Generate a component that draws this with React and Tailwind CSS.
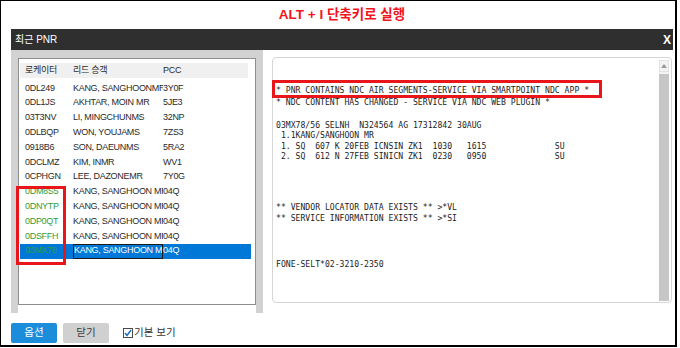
import React from 'react';

const rows = [
  { loc: '0DL249', name: 'KANG, SANGHOONMR', pcc: '3Y0F' },
  { loc: '0DL1JS', name: 'AKHTAR, MOIN MR', pcc: '5JE3' },
  { loc: '03T3NV', name: 'LI, MINGCHUNMS', pcc: '32NP' },
  { loc: '0DLBQP', name: 'WON, YOUJAMS', pcc: '7ZS3' },
  { loc: '0918B6', name: 'SON, DAEUNMS', pcc: '5RA2' },
  { loc: '0DCLMZ', name: 'KIM, INMR', pcc: 'WV1' },
  { loc: '0CPHGN', name: 'LEE, DAZONEMR', pcc: '7Y0G' },
  { loc: '0DM8S5', name: 'KANG, SANGHOON MR', pcc: '04Q', ndc: true },
  { loc: '0DNYTP', name: 'KANG, SANGHOON MR', pcc: '04Q', ndc: true },
  { loc: '0DP0QT', name: 'KANG, SANGHOON MR', pcc: '04Q', ndc: true },
  { loc: '0DSFFH', name: 'KANG, SANGHOON MR', pcc: '04Q', ndc: true },
  { loc: '03MX78', name: 'KANG, SANGHOON MR', pcc: '04Q', ndc: true, selected: true },
];

const Line = ({ children, className = '' }) => (
  <div className={`h-[10.4px] leading-[10.4px] whitespace-pre ${className}`}>{children}</div>
);

const PnrList = () => (
  <div className="w-[252px] h-[263px] border-x-[7px] border-t-[8px] border-[#d2d2d2] bg-white">
    <div className="h-[247px] border border-[#8e8e8e] bg-white pt-[4px] text-[9px] tracking-[-0.3px] text-[#2a2a2a]">
      <div className="ml-[1px] mr-[7px] h-[15px] bg-[#f0f0f0] flex items-center">
        <span className="pl-[5px] w-[53px]">로케이터</span>
        <span className="w-[90px]">리드 승객</span>
        <span>PCC</span>
      </div>
      <div className="mt-[3px] ml-[1px] mr-[4px]">
        {rows.map((r) => (
          <div
            key={r.loc}
            className={`h-[14.8px] flex items-center ${r.selected ? 'bg-[#0078d7] text-white' : ''}`}
          >
            <span className={`pl-[5px] w-[53px] ${r.ndc ? (r.selected ? 'text-[#2f9c48]' : 'text-[#2e9e3c]') : ''}`}>{r.loc}</span>
            <span
              className={`w-[90px] h-full flex items-center overflow-hidden whitespace-nowrap ${r.selected ? 'border border-[#1b1b1b]' : ''}`}
            >
              {r.name}
            </span>
            <span>{r.pcc}</span>
          </div>
        ))}
      </div>
    </div>
  </div>
);

const PnrText = () => (
  <div className="ml-[9px] mt-[7px] w-[400px] h-[246px] rounded-[4px] border border-[#d6d6d6] flex bg-white">
    <div className="flex-1 pt-[27px] pl-[3px] font-['DejaVu_Sans_Mono',monospace] text-[8.15px] text-[#1c1c1c]">
      <Line>* PNR CONTAINS NDC AIR SEGMENTS-SERVICE VIA SMARTPOINT NDC APP *</Line>
      <Line className="mt-[1.5px]">* NDC CONTENT HAS CHANGED - SERVICE VIA NDC WEB PLUGIN *</Line>
      <div className="h-[12.5px]" />
      <Line>03MX78/56 SELNH  N324564 AG 17312842 30AUG</Line>
      <Line> 1.1KANG/SANGHOON MR</Line>
      <Line> 1. SQ  607 K 20FEB ICNSIN ZK1  1030   1615              SU</Line>
      <Line> 2. SQ  612 N 27FEB SINICN ZK1  0230   0950              SU</Line>
      <div className="h-[41px]" />
      <Line>** VENDOR LOCATOR DATA EXISTS ** &gt;*VL</Line>
      <Line>** SERVICE INFORMATION EXISTS ** &gt;*SI</Line>
      <div className="h-[36px]" />
      <Line>FONE-SELT*02-3210-2350</Line>
    </div>
    <div className="w-[10px] mr-[2px] mt-[2px] mb-[1px] flex flex-col bg-[#f3f3f3]">
      <div className="h-[12px] flex items-center justify-center border border-[#e2e2e2]">
        <svg width="6" height="4" viewBox="0 0 6 4"><polygon points="3,0 6,4 0,4" fill="#9a9a9a" /></svg>
      </div>
      <div className="flex-1 mt-[2px] bg-[#c6c6c6]" />
    </div>
  </div>
);

export default function App() {
  return (
    <div className="relative w-[680px] h-[348px] bg-white overflow-hidden font-['Liberation_Sans','Noto_Sans_CJK_KR',sans-serif]">
      <div className="w-[677px] h-[347px] border-l border-t border-r-2 border-b-2 border-black flex flex-col">
        <div className="h-[28px] flex items-center justify-center pl-[8px] text-[13.5px] font-bold text-[#f2141c]">
          ALT + I 단축키로 실행
        </div>
        <div className="ml-[10px] w-[662px] flex flex-col">
          <div className="h-[21px] bg-[#2f2f2f] flex items-center justify-between pl-[4px] pr-[2px] text-white">
            <span className="text-[10px]">최근 PNR</span>
            <span className="text-[12px] font-bold leading-none">X</span>
          </div>
          <div className="flex">
            <PnrList />
            <PnrText />
          </div>
          <div className="mt-[10px] flex items-center text-[10.5px]">
            <div className="w-[46px] h-[20px] rounded-[2px] bg-[#1c8ddb] text-white flex items-center justify-center">옵션</div>
            <div className="ml-[6px] w-[46px] h-[20px] rounded-[2px] bg-[#d0d0d0] text-[#3a3a3a] flex items-center justify-center">닫기</div>
            <div className="ml-[14px] w-[10px] h-[10px] border border-[#4a4a4a] bg-white flex items-center justify-center">
              <svg width="8" height="8" viewBox="0 0 8 8"><polyline points="1,4 3,6.5 7,1" fill="none" stroke="#1b6fc4" strokeWidth="1.5" /></svg>
            </div>
            <span className="ml-[1px] text-[#333]">기본 보기</span>
          </div>
        </div>
      </div>
      {/* annotation boxes */}
      <div className="absolute left-[16px] top-[186px] w-[50px] h-[79px] border-[3px] border-[#e8161b]" />
      <div className="absolute left-[272px] top-[80px] w-[330px] h-[18px] border-[3px] border-[#e8161b]" />
    </div>
  );
}
